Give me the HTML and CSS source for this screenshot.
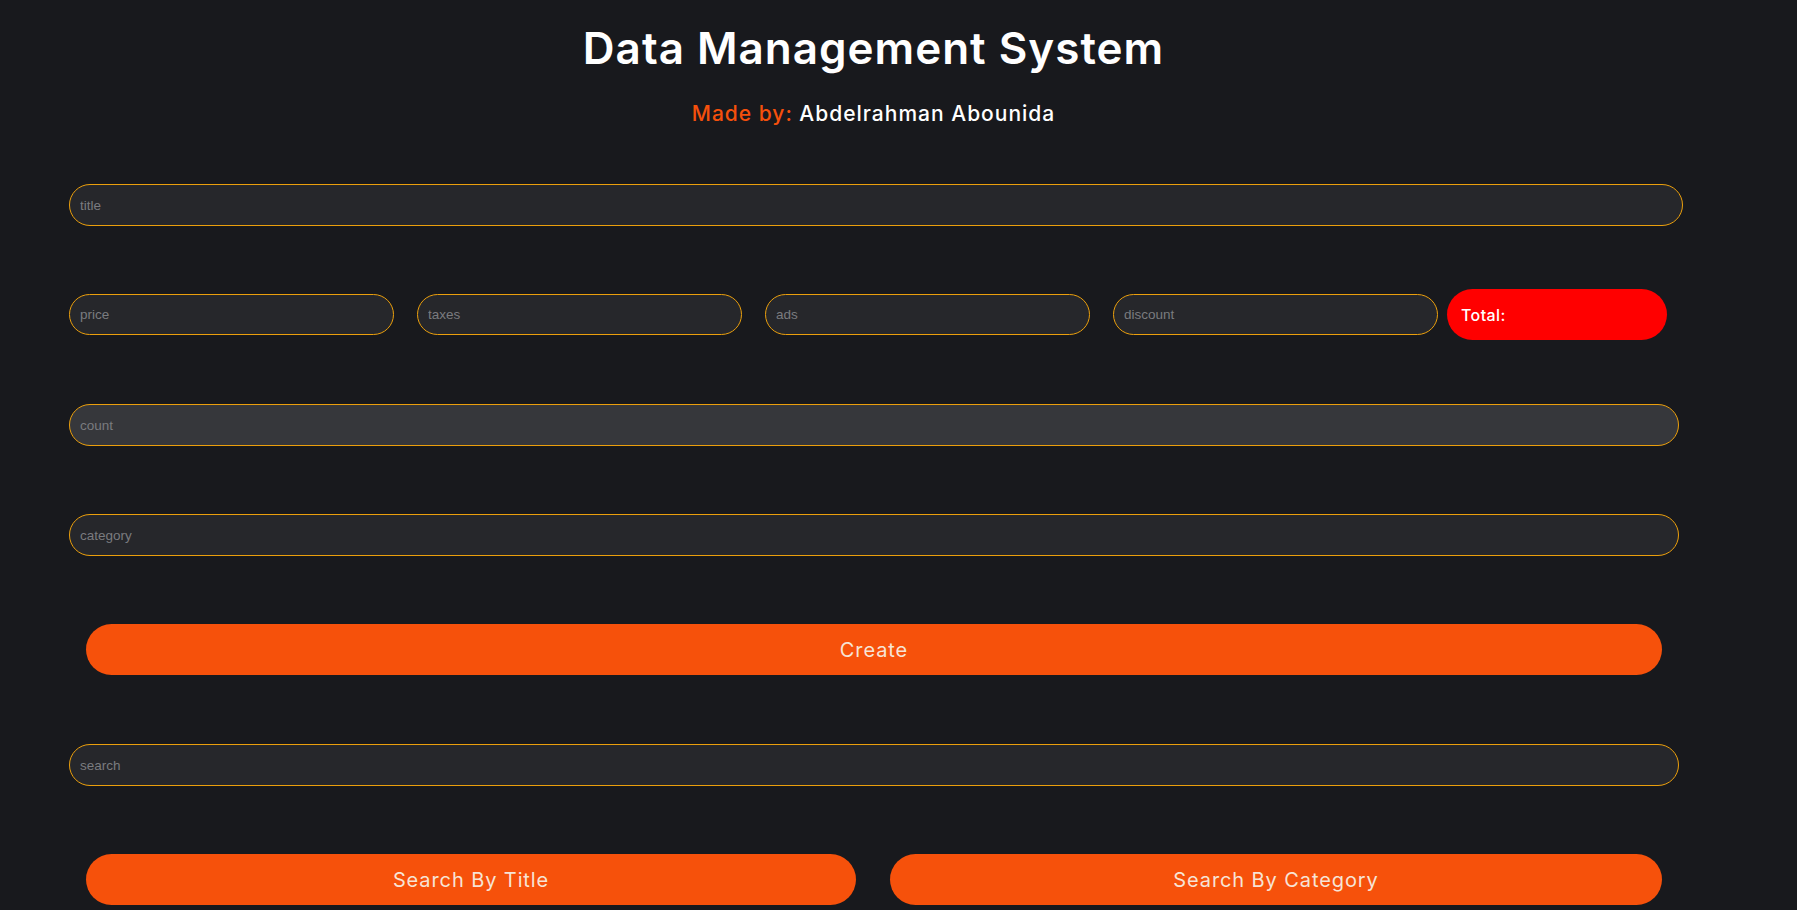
FILE: index.html
```html
<!DOCTYPE html>
<html lang="en">
<head>
<meta charset="utf-8">
<title>Data Management System</title>
<link rel="stylesheet" href="styles.css">
</head>
<body>
<header class="head">
  <h1 class="title">Data Management System</h1>
  <p class="byline"><span class="by">Made by:</span> Abdelrahman Abounida</p>
</header>
<main class="crud">
  <input class="field field-title" type="text" placeholder="title">
  <div class="price-row">
    <input class="field field-small" type="number" placeholder="price">
    <input class="field field-small" type="number" placeholder="taxes">
    <input class="field field-small" type="number" placeholder="ads">
    <input class="field field-small" type="number" placeholder="discount">
    <small class="total">Total:</small>
  </div>
  <input class="field field-wide field-active" type="number" placeholder="count" autofocus>
  <input class="field field-wide" type="text" placeholder="category">
  <button class="btn btn-create" type="button">Create</button>
  <input class="field field-wide field-search" type="text" placeholder="search">
  <div class="search-btns">
    <button class="btn btn-search" type="button">Search By Title</button>
    <button class="btn btn-search btn-search-cat" type="button">Search By Category</button>
  </div>
</main>
</body>
</html>
```

FILE: styles.css
```css
* {
  box-sizing: border-box;
}

html, body {
  margin: 0;
  padding: 0;
  background: #18191d;
}

body {
  font-family: Inter, "Open Sans", sans-serif;
  color: #ffffff;
  min-height: 910px;
}

.head {
  text-align: center;
  padding-top: 22px;
  padding-right: 50px;
}

.title {
  margin: 0;
  font-size: 44px;
  line-height: 52px;
  font-weight: 600;
  letter-spacing: 1px;
  color: #ffffff;
}

.byline {
  margin: 27px 0 0;
  font-size: 21px;
  line-height: 26px;
  font-weight: 500;
  letter-spacing: 1px;
  color: #ffffff;
}

.by {
  color: #f5500c;
}

.crud {
  display: flex;
  flex-direction: column;
  align-items: flex-start;
  margin-left: 69px;
  width: 1614px;
  padding-top: 57px;
}

.field {
  display: block;
  height: 42px;
  border: 1px solid #eb9f0c;
  border-radius: 21px;
  background: #26272b;
  color: #d0d0d0;
  font-family: "Liberation Sans", Arial, sans-serif;
  font-size: 13.5px;
  padding: 0 10px;
  outline: none;
  caret-color: #8a8a8a;
  -moz-appearance: textfield;
}

.field::-webkit-outer-spin-button,
.field::-webkit-inner-spin-button {
  -webkit-appearance: none;
  margin: 0;
}

.field::placeholder {
  color: #7a7b7f;
}

.field-title {
  width: 1614px;
}

.field-wide {
  width: 1610px;
}

.field-active {
  background: #36373b;
  margin-top: 64px;
}

.field-active + .field {
  margin-top: 68px;
}

.field-search {
  margin-top: 69px;
}

.price-row {
  margin-top: 63px;
  height: 51px;
  display: flex;
  align-items: center;
  gap: 23px;
}

.field-small {
  width: 325px;
  height: 41px;
}

.total {
  display: flex;
  align-items: center;
  width: 220px;
  height: 51px;
  margin-left: -14px;
  padding: 0 14px;
  border-radius: 26px;
  background: #ff0000;
  color: #ffffff;
  font-size: 16px;
  font-weight: 500;
  letter-spacing: 0.4px;
}

.btn {
  display: block;
  height: 51px;
  border: none;
  border-radius: 26px;
  background: #f6510b;
  color: #f7e4d6;
  font-family: Inter, "Open Sans", sans-serif;
  font-size: 20px;
  font-weight: 400;
  letter-spacing: 0.9px;
  cursor: pointer;
}

.btn-create {
  width: 1576px;
  margin-top: 68px;
  margin-left: 17px;
}

.search-btns {
  display: flex;
  gap: 34px;
  margin-top: 68px;
  margin-left: 17px;
}

.btn-search {
  width: 770px;
}

.btn-search-cat {
  width: 772px;
}
```
